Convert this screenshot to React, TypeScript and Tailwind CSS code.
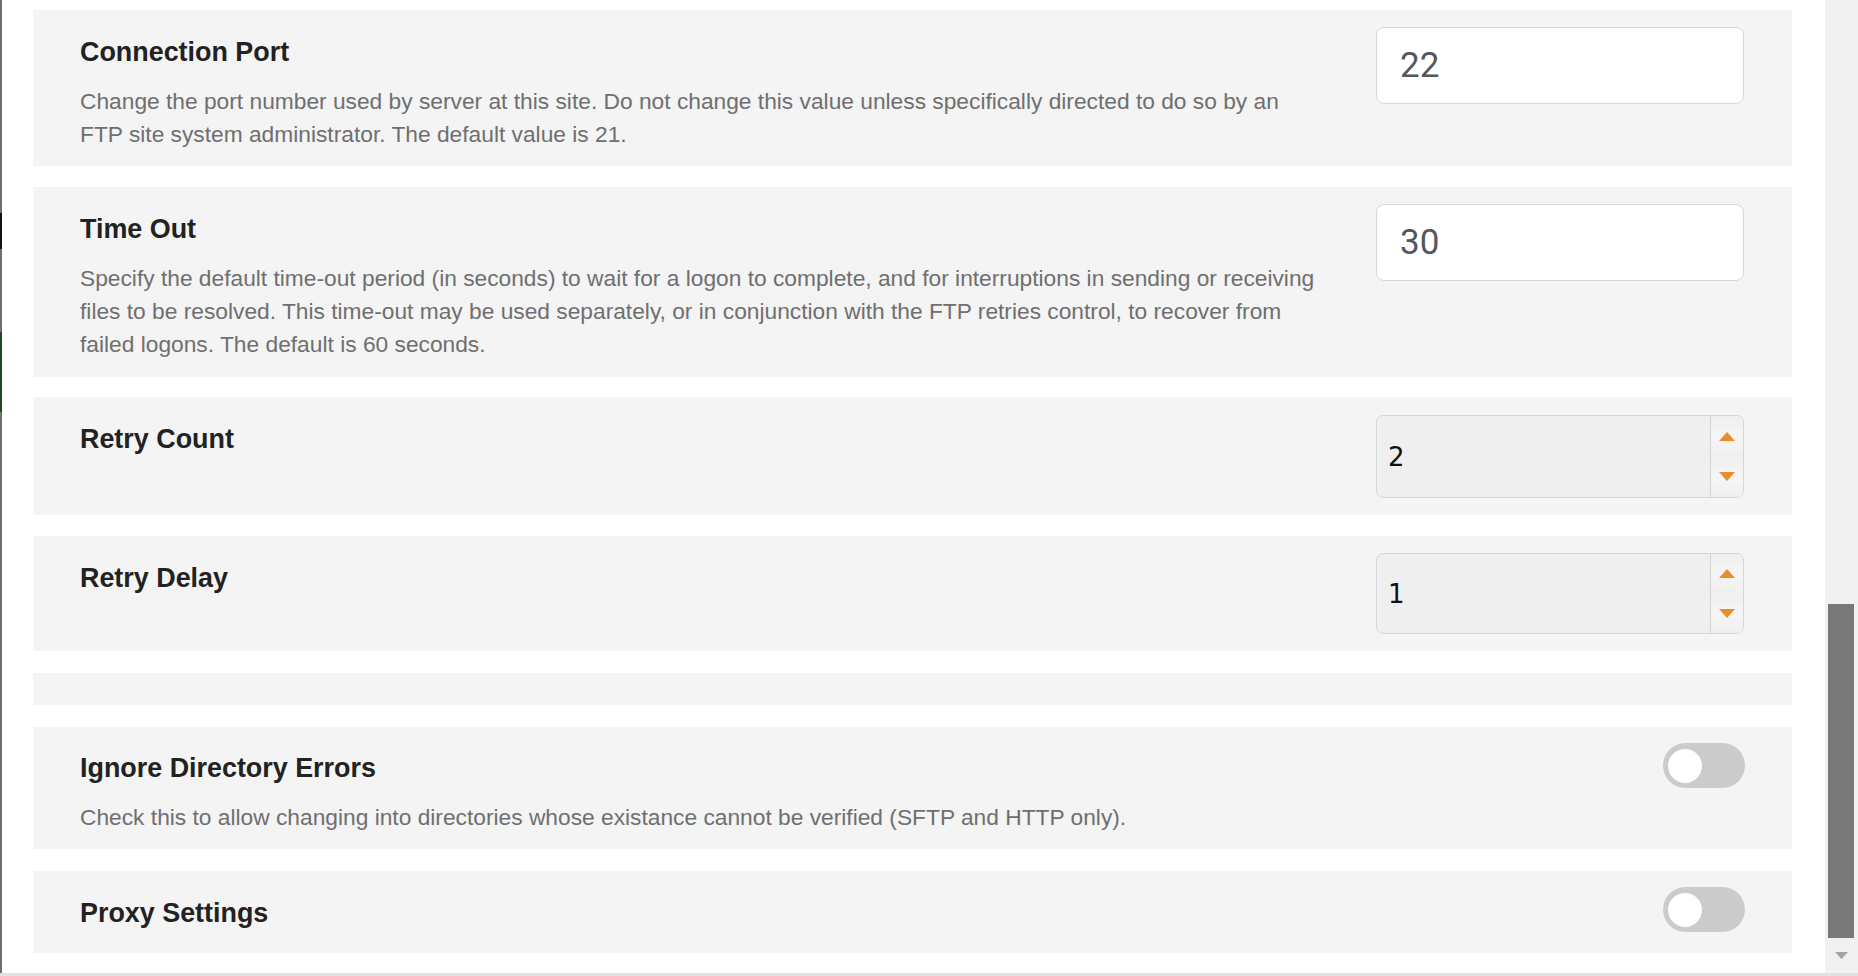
import React from "react";

const titleCls =
  "text-[26.9px] leading-[32px] font-bold text-[#222222] whitespace-nowrap";
const descCls =
  "mt-[17px] text-[22.75px] leading-[33px] text-[#6f6f6f] whitespace-nowrap";

function Desc({ lines }: { lines: string[] }) {
  return (
    <div className={descCls}>
      {lines.map((l, i) => (
        <div key={i}>{l}</div>
      ))}
    </div>
  );
}

function TextInput({ value }: { value: string }) {
  return (
    <div className="w-[368px] h-[77px] bg-white border border-[#d3d7dc] rounded-[8px] flex items-center pl-[23px]">
      <span
        className="text-[35px] text-[#53575d] leading-none"
        style={{ fontFamily: "Roboto, 'Liberation Sans', sans-serif" }}
      >
        {value}
      </span>
    </div>
  );
}

function SpinInput({ value, h }: { value: string; h: string }) {
  return (
    <div
      className={`w-[368px] ${h} bg-[#efefef] border border-[#d6d6d6] rounded-[7px] flex overflow-hidden`}
    >
      <div className="flex-1 flex items-center pl-[11px]">
        <span
          className="text-[26px] text-[#111111] leading-none"
          style={{ fontFamily: "'DejaVu Sans', sans-serif" }}
        >
          {value}
        </span>
      </div>
      <div className="w-[33px] border-l border-[#d2d2d2] flex flex-col">
        <div className="flex-1 flex items-center justify-center bg-gradient-to-b from-[#efefef] via-[#f6f6f6] to-[#efefef]">
          <svg width="16" height="9" viewBox="0 0 16 9">
            <polygon points="8,0 16,9 0,9" fill="#e98c2b" />
          </svg>
        </div>
        <div className="flex-1 flex items-center justify-center bg-gradient-to-b from-[#efefef] via-[#f6f6f6] to-[#efefef]">
          <svg width="16" height="9" viewBox="0 0 16 9">
            <polygon points="0,0 16,0 8,9" fill="#e98c2b" />
          </svg>
        </div>
      </div>
    </div>
  );
}

function Toggle() {
  return (
    <div className="w-[82px] h-[45px] rounded-full bg-[#cbcbcb] flex items-center pl-[5px]">
      <div className="w-[34px] h-[34px] rounded-full bg-white" />
    </div>
  );
}

export default function App() {
  return (
    <div
      className="w-[1858px] h-[976px] bg-white flex flex-col overflow-hidden"
      style={{ fontFamily: "'Liberation Sans', Arial, sans-serif" }}
    >
      <div className="flex h-[973px]">
        {/* left window edge */}
        <div className="w-[2px] flex flex-col">
          <div className="h-[213px] bg-[#6e6e6e]" />
          <div className="h-[36px] bg-[#111111]" />
          <div className="h-[83px] bg-[#6e6e6e]" />
          <div className="h-[80px] bg-[#1d4a1d]" />
          <div className="flex-1 bg-[#6e6e6e]" />
        </div>

        {/* content */}
        <div className="flex-1 flex flex-col pl-[31px] pr-[33px] pt-[10px]">
          {/* Connection Port */}
          <div className="h-[156px] bg-[#f4f4f4] flex pl-[47px] pr-[48px]">
            <div className="flex-1 pt-[26px]">
              <div className={titleCls}>Connection Port</div>
              <Desc
                lines={[
                  "Change the port number used by server at this site. Do not change this value unless specifically directed to do so by an",
                  "FTP site system administrator. The default value is 21.",
                ]}
              />
            </div>
            <div className="pt-[17px]">
              <TextInput value="22" />
            </div>
          </div>

          {/* Time Out */}
          <div className="mt-[21px] h-[190px] bg-[#f4f4f4] flex pl-[47px] pr-[48px]">
            <div className="flex-1 pt-[26px]">
              <div className={titleCls}>Time Out</div>
              <Desc
                lines={[
                  "Specify the default time-out period (in seconds) to wait for a logon to complete, and for interruptions in sending or receiving",
                  "files to be resolved. This time-out may be used separately, or in conjunction with the FTP retries control, to recover from",
                  "failed logons. The default is 60 seconds.",
                ]}
              />
            </div>
            <div className="pt-[17px]">
              <TextInput value="30" />
            </div>
          </div>

          {/* Retry Count */}
          <div className="mt-[20px] h-[118px] bg-[#f4f4f4] flex pl-[47px] pr-[48px]">
            <div className="flex-1 pt-[26px]">
              <div className={titleCls}>Retry Count</div>
            </div>
            <div className="pt-[18px]">
              <SpinInput value="2" h="h-[83px]" />
            </div>
          </div>

          {/* Retry Delay */}
          <div className="mt-[21px] h-[115px] bg-[#f4f4f4] flex pl-[47px] pr-[48px]">
            <div className="flex-1 pt-[26px]">
              <div className={titleCls}>Retry Delay</div>
            </div>
            <div className="pt-[17px]">
              <SpinInput value="1" h="h-[81px]" />
            </div>
          </div>

          {/* empty */}
          <div className="mt-[22px] h-[32px] bg-[#f4f4f4]" />

          {/* Ignore Directory Errors */}
          <div className="mt-[22px] h-[122px] bg-[#f4f4f4] flex pl-[47px] pr-[47px]">
            <div className="flex-1 pt-[25px]">
              <div className={titleCls}>Ignore Directory Errors</div>
              <Desc
                lines={[
                  "Check this to allow changing into directories whose existance cannot be verified (SFTP and HTTP only).",
                ]}
              />
            </div>
            <div className="pt-[16px]">
              <Toggle />
            </div>
          </div>

          {/* Proxy Settings */}
          <div className="mt-[22px] h-[82px] bg-[#f4f4f4] flex pl-[47px] pr-[47px]">
            <div className="flex-1 pt-[26px]">
              <div className={titleCls}>Proxy Settings</div>
            </div>
            <div className="pt-[16px]">
              <Toggle />
            </div>
          </div>
        </div>

        {/* scrollbar */}
        <div className="w-[33px] bg-[#f1f1f1] flex flex-col pl-[3px] pr-[4px]">
          <div className="h-[604px]" />
          <div className="h-[334px] bg-[#787878]" />
          <div className="flex-1 flex items-center justify-center">
            <svg width="13" height="7" viewBox="0 0 13 7">
              <polygon points="0,0 13,0 6.5,7" fill="#a3a3a3" />
            </svg>
          </div>
        </div>
      </div>
      <div className="h-[3px] bg-[#dde2e7]" />
    </div>
  );
}
